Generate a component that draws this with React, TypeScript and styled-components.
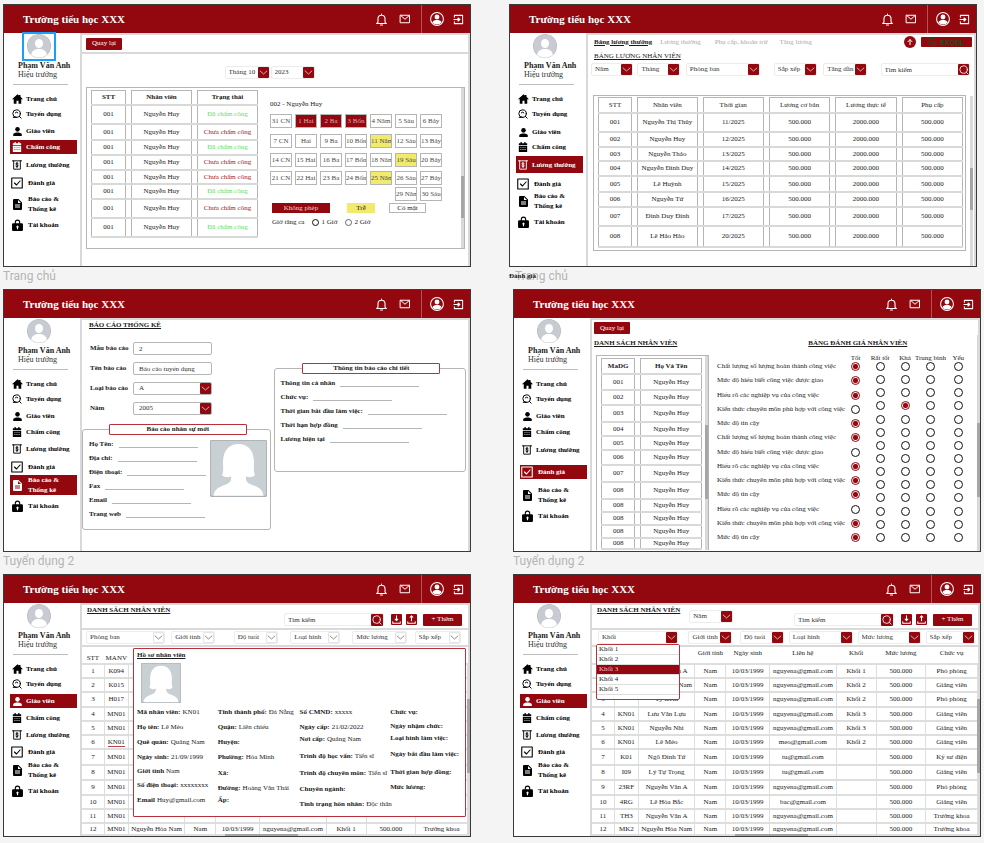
import React from 'react';
import styled, { createGlobalStyle, css } from 'styled-components';

const RED = '#93070f';
const LINE = '#d9d9d9';
const EDGE = '#b5b5b5';
const SERIF = '"Liberation Serif", "Times New Roman", serif';

const Global = createGlobalStyle`
  * { box-sizing: border-box; }
  body { margin: 0; background: #f4f4f4; font-family: ${SERIF}; font-size: 7px; line-height: 9px; color: #1a1a1a; }
  button, input, select { font: inherit; color: inherit; margin: 0; padding: 0; border: 0; background: none; border-radius: 0; }
  h1, h2, p, dl, dd, ul, fieldset, legend { margin: 0; padding: 0; border: 0; list-style: none; }
  a { color: inherit; text-decoration: none; }
`;

/* ---------- canvas ---------- */

const Canvas = styled.main`
  padding-top: 4px;
  min-height: 100vh;
`;
const BoardRow = styled.div<{ $gap: number; $end: number }>`
  display: flex;
  gap: ${(p) => p.$gap}px;
  padding: 0 ${(p) => p.$end}px 0 3px;
`;
const BoardCell = styled.section`
  flex: 1 1 0;
  min-width: 0;
  position: relative;
`;
const Frame = styled.div`
  display: flex;
  flex-direction: column;
  min-height: 263px;
  border: 1px solid #3a3a3a;
  background: #fff;
`;
const BoardName = styled.p<{ $indent?: number }>`
  height: 22px;
  padding-left: ${(p) => p.$indent ?? 0}px;
  font: 12px/19px Roboto, sans-serif;
  color: #b4b4b4;
`;
const StrayName = styled.p`
  position: absolute;
  left: 0;
  bottom: 8px;
  font-weight: bold;
`;

/* ---------- icons ---------- */

const Svg = styled.svg<{ $w?: number; $h?: number }>`
  display: block;
  flex: none;
  width: ${(p) => p.$w ?? 10}px;
  height: ${(p) => p.$h ?? p.$w ?? 10}px;
  fill: currentColor;
`;
type LineProps = { w?: number; h?: number; sw?: number; children: React.ReactNode };
const Line = ({ w, h, children, sw = 2 }: LineProps) => (
  <Svg viewBox="0 0 24 24" $w={w} $h={h} aria-hidden>
    <g fill="none" stroke="currentColor" strokeWidth={sw} strokeLinecap="round" strokeLinejoin="round">{children}</g>
  </Svg>
);
const HomeIcon = () => (
  <Svg viewBox="1 2 22 19" $w={11} $h={10} aria-hidden><path d="M10 21v-6h4v6h5.5v-9H23L18 7V3.5h-3v1L12 2 1 12h3.5v9z" /></Svg>
);
const HuntIcon = () => (
  <Line w={10} sw={2.4}><circle cx="11" cy="11" r="9" /><path d="M11 20H3M17.5 17.5 22 22M8 9a4 4 0 0 1 6 0" /></Line>
);
const PersonIcon = () => (
  <Svg viewBox="3 2 18 19" $w={9} aria-hidden><circle cx="12" cy="7" r="4.8" /><path d="M12 13.500c-3 0-9 1-9 4.500v3h18v-3c0-3.500-6-4.500-9-4.500z" /></Svg>
);
const CalendarIcon = () => (
  <Svg viewBox="0 0 24 24" $w={10} aria-hidden>
    <path fillRule="evenodd" d="M6 0h3v3h6V0h3v3h4v4H2V3h4zM2 9h20v15H2zM6 12v2h2v-2zm5 0v2h2v-2zm5 0v2h2v-2zM6 17v2h2v-2zm5 0v2h2v-2zm5 0v2h2v-2z" />
  </Svg>
);
const SalaryIcon = () => (
  <Line w={10} sw={2.2}><path d="M1 2h22M4 2v20h16V2M15 8.500c-1-1.500-6-1.500-6 1s6 2 6 4.500-5 2.500-6 1M12 6v12" /></Line>
);
const CheckIcon = () => (
  <Line w={12} sw={2.2}><path d="M1.500 2h21v20h-21zM7 12l4 4 7-8" /></Line>
);
const FileIcon = () => (
  <Svg viewBox="3 1 18 22" $w={9} $h={11} aria-hidden>
    <path fillRule="evenodd" d="M14 1H5a2 2 0 0 0-2 2v18a2 2 0 0 0 2 2h14a2 2 0 0 0 2-2V8zm3 17H7v-2h10zm0-4H7v-2h10zm-4-5V3l6 6z" />
  </Svg>
);
const LockIcon = () => (
  <Svg viewBox="2 0 20 22" $w={11} $h={12} aria-hidden>
    <path fillRule="evenodd" d="M18 8h-1V6A5 5 0 0 0 7 6v2H4a2 2 0 0 0-2 2v10a2 2 0 0 0 2 2h16a2 2 0 0 0 2-2V10a2 2 0 0 0-2-2zm-5 8v3h-2v-3a2 2 0 1 1 2 0zm2-8H9V6a3 3 0 0 1 6 0z" />
  </Svg>
);
const BellIcon = () => (
  <Line w={13}><path d="M12 2v2M12 4a6.500 6.500 0 0 0-6.500 6.500V17L3 19.500h18L18.500 17v-6.500A6.500 6.500 0 0 0 12 4zM10 22h4" /></Line>
);
const MailIcon = () => (
  <Line w={12} sw={2}><path d="M3 4.500h18v15H3zM3.500 5 12 12.500 20.500 5" /></Line>
);
const AccountIcon = () => (
  <Svg viewBox="0 0 24 24" $w={14} aria-hidden>
    <circle cx="12" cy="12" r="11" fill="none" stroke="currentColor" strokeWidth="1.8" />
    <circle cx="12" cy="8.500" r="4.200" />
    <path d="M4 18c1-3.500 5-4.500 8-4.500s7 1 8 4.500c-4 4.500-12 4.500-16 0z" />
  </Svg>
);
const ExitIcon = () => (
  <Line w={11} sw={2.2}><path d="M3 7V3h18v18H3v-4M2 12h11M11 8.500 15 12l-4 3.500z" /></Line>
);
const ChevronIcon = () => <Line w={9} sw={1.8}><path d="M3 8l9 8 9-8" /></Line>;
const SearchIcon = () => <Line w={10} sw={2}><circle cx="11" cy="11" r="9" /><path d="M17 17l5 5" /></Line>;
const DownIcon = () => <Line w={9} sw={2.8}><path d="M12 2v12M8.500 11l3.500 4 3.500-4M2 18v4h20v-4" /></Line>;
const UpIcon = () => <Line w={9} sw={2.8}><path d="M12 15V3M8.500 6 12 2l3.500 4M2 18v4h20v-4" /></Line>;
const ArrowUpIcon = () => <Line w={8} sw={3}><path d="M12 20V5M6 11l6-6 6 6" /></Line>;
const SheetIcon = () => <Line w={8} sw={3}><path d="M3 2h12l6 6v14H3zM8 12h8M8 17h8" /></Line>;
const AvatarArt = () => (
  <Svg viewBox="0 0 48 48" $w={24} aria-hidden>
    <clipPath id="disc"><circle cx="24" cy="24" r="23" /></clipPath>
    <circle cx="24" cy="24" r="24" fill="#b4b8bd" />
    <circle cx="24" cy="24" r="23" fill="#c8ccd2" />
    <g clipPath="url(#disc)" fill="#fff"><ellipse cx="24" cy="19" rx="8" ry="9" /><path d="M8 44c1-11 8-14 16-14s15 3 16 14l-6 6H14z" /></g>
  </Svg>
);
const PortraitArt = ({ size }: { size: number }) => (
  <Svg viewBox="0 0 100 100" $w={size} aria-hidden>
    <rect width="100" height="100" rx="2" fill="#aab0b3" />
    <rect x="1.500" y="1.500" width="97" height="96" fill="#c9d0d3" />
    <path fill="#fff" d="M50 7c17 0 26 12 27 28 1 12-2 18 2 27-5 4-11 4-16 2-1 8 3 12 9 14 11 4 20 7 22 20H6c2-13 11-16 22-20 6-2 10-6 9-14-5 2-11 2-16-2 4-9 1-15 2-27C24 19 33 7 50 7z" />
  </Svg>
);

/* ---------- header and sidebar ---------- */

const TopBar = styled.header`
  display: flex;
  align-items: center;
  height: 28px;
  padding: 0 6px 0 19px;
  background: ${RED};
  color: #fff;
`;
const SchoolName = styled.h1`
  flex: 1;
  font-size: 11px;
  line-height: 14px;
`;
const IconButton = styled.button`
  display: flex;
  margin-left: 11px;
`;
const AccountArea = styled.div`
  display: flex;
  align-items: center;
  align-self: stretch;
  gap: 9px;
  margin-left: 10px;
  padding-left: 8px;
  border-left: 1px solid #b95057;
  ${IconButton} { margin-left: 0; }
`;
const Body = styled.div`
  flex: 1;
  display: flex;
`;
const Sidebar = styled.aside`
  flex: 0 0 76px;
  padding: 1px 3px 4px 6px;
`;
const AvatarBox = styled.div<{ $selected?: boolean }>`
  width: 30px;
  margin-left: 14px;
  padding: 0 3px 1px;
  ${(p) => p.$selected && css`outline: 2px solid #18a0fb;`}
`;
const UserName = styled.p`
  margin-top: 1px;
  padding-left: 8px;
  font-size: 8px;
  line-height: 11px;
  font-weight: bold;
  white-space: nowrap;
`;
const UserRole = styled.p`
  padding-left: 8px;
  font-size: 8px;
  line-height: 8px;
  color: #333;
`;
const SideRule = styled.hr`
  width: 55px;
  margin: 5px 0 7px 3px;
  border: 0;
  border-top: 1px solid #bdbdbd;
`;
const NavItem = styled.li<{ $gap: number }>`
  margin-top: ${(p) => p.$gap}px;
`;
const NavLink = styled.a<{ $active: boolean; $late: boolean; $tall: boolean }>`
  display: flex;
  align-items: center;
  gap: ${(p) => (p.$late ? 5 : 3)}px;
  min-height: ${(p) => (p.$tall ? 17 : 14)}px;
  padding: 0 1px;
  font-weight: bold;
  line-height: 10px;
  white-space: pre;
  background: ${(p) => (p.$active ? RED : 'transparent')};
  color: ${(p) => (p.$active ? '#fff' : '#000')};
`;
const NavIcon = styled.span`
  display: flex;
  justify-content: center;
  flex: 0 0 12px;
`;
const Main = styled.div`
  flex: 1;
  min-width: 0;
  display: flex;
  flex-direction: column;
  position: relative;
  border: 2px solid ${LINE};
  border-bottom: 0;
`;

const NAV: [string, () => React.JSX.Element][] = [
  ['Trang chủ', HomeIcon],
  ['Tuyển dụng', HuntIcon],
  ['Giáo viên', PersonIcon],
  ['Chấm công', CalendarIcon],
  ['Lương thưởng', SalaryIcon],
  ['Đánh giá', CheckIcon],
  ['Báo cáo &\nThống kê', FileIcon],
  ['Tài khoản', LockIcon],
];

type BoardProps = {
  name: string;
  indent?: number;
  active: number;
  gaps: number[];
  tall?: boolean;
  selected?: boolean;
  stray?: string;
  children: React.ReactNode;
};
const Board = ({ name, indent, active, gaps, tall, selected, stray, children }: BoardProps) => (
  <BoardCell>
    <Frame>
      <TopBar>
        <SchoolName>Trường tiểu học XXX</SchoolName>
        <IconButton aria-label="Thông báo"><BellIcon /></IconButton>
        <IconButton aria-label="Thư"><MailIcon /></IconButton>
        <AccountArea>
          <IconButton aria-label="Hồ sơ"><AccountIcon /></IconButton>
          <IconButton aria-label="Đăng xuất"><ExitIcon /></IconButton>
        </AccountArea>
      </TopBar>
      <Body>
        <Sidebar>
          <AvatarBox $selected={selected}><AvatarArt /></AvatarBox>
          <UserName>Phạm Văn Anh</UserName>
          <UserRole>Hiệu trưởng</UserRole>
          <SideRule />
          <nav>
            <ul>
              {NAV.map(([label, Icon], i) => (
                <NavItem key={label} $gap={gaps[i]}>
                  <NavLink href="#" $active={i === active} $late={i > 4} $tall={i === active && !!tall}>
                    <NavIcon><Icon /></NavIcon>
                    {label}
                  </NavLink>
                </NavItem>
              ))}
            </ul>
          </nav>
        </Sidebar>
        <Main>{children}</Main>
      </Body>
    </Frame>
    {name && <BoardName $indent={indent}>{name}</BoardName>}
    {stray && <StrayName>{stray}</StrayName>}
  </BoardCell>
);

/* ---------- shared controls ---------- */

const FieldBox = styled.span<{ $w: number; $gap?: number; $edge?: string; $fixed?: boolean }>`
  display: flex;
  align-items: center;
  flex: ${(p) => (p.$fixed ? `0 0 ${p.$w}px` : `${p.$w} 1 0`)};
  min-width: 0;
  height: 13px;
  margin-left: ${(p) => p.$gap ?? 0}px;
  border: 1px solid ${(p) => p.$edge ?? '#ececec'};
  border-radius: 2px;
  background: #fff;
  select, input {
    flex: 1;
    width: 0;
    min-width: 0;
    height: 11px;
    padding-left: 3px;
    appearance: none;
    outline: 0;
    color: #333;
  }
  input::placeholder { color: #333; }
`;
const ArrowBox = styled.span<{ $plain?: boolean }>`
  display: flex;
  align-items: center;
  justify-content: center;
  flex: 0 0 11px;
  height: 11px;
  border-radius: 1px;
  pointer-events: none;
  background: ${(p) => (p.$plain ? '#fff' : RED)};
  color: ${(p) => (p.$plain ? '#555' : '#fff')};
  border: ${(p) => (p.$plain ? '1px solid #e4e4e4' : '0')};
`;
type PickProps = { label: string; value?: string; w: number; gap?: number; plain?: boolean; edge?: string; fixed?: boolean };
const Pick = ({ label, value, w, gap, plain, edge, fixed }: PickProps) => (
  <FieldBox $w={w} $gap={gap} $edge={edge} $fixed={fixed}>
    <select aria-label={label}><option>{value ?? label}</option></select>
    <ArrowBox $plain={plain}><ChevronIcon /></ArrowBox>
  </FieldBox>
);
const SquareButton = styled.button<{ $gap?: number; $size?: number }>`
  display: flex;
  align-items: center;
  justify-content: center;
  flex: none;
  width: ${(p) => p.$size ?? 11}px;
  height: ${(p) => p.$size ?? 11}px;
  margin-left: ${(p) => p.$gap ?? 0}px;
  border-radius: 1px;
  background: ${RED};
  color: #fff;
`;
const RedButton = styled.button<{ $w: number; $gap?: number }>`
  display: flex;
  align-items: center;
  justify-content: center;
  gap: 3px;
  flex: 0 0 ${(p) => p.$w}px;
  height: 12px;
  margin-left: ${(p) => p.$gap ?? 0}px;
  border-radius: 1px;
  background: ${RED};
  color: #fff;
`;
const ExcelButton = styled(RedButton)`
  height: 10px;
  font: bold 8px/9px Roboto, sans-serif;
  color: #2b4a1c;
`;
const RoundButton = styled(SquareButton)`
  border-radius: 50%;
`;
const Title = styled.h2<{ $light?: boolean }>`
  font-size: 7px;
  line-height: 9px;
  font-weight: ${(p) => (p.$light ? 'normal' : 'bold')};
  text-decoration: underline;
  white-space: nowrap;
`;
const Bar = styled.div<{ $h: number; $l?: number; $r?: number; $ruled?: boolean; $top?: boolean }>`
  display: flex;
  align-items: ${(p) => (p.$top ? 'flex-start' : 'center')};
  min-height: ${(p) => p.$h}px;
  padding: 0 ${(p) => p.$r ?? 0}px 0 ${(p) => p.$l ?? 4}px;
  border-bottom: ${(p) => (p.$ruled ? `2px solid ${LINE}` : '0')};
`;
const Spacer = styled.span`
  flex: 1;
`;
const ScrollTrack = styled.div<{ $right: number; $top: number; $start: number; $len: number; $clear?: boolean }>`
  position: absolute;
  top: ${(p) => p.$top}px;
  bottom: 0;
  right: ${(p) => p.$right}px;
  width: 3px;
  background: ${(p) => (p.$clear ? 'transparent' : LINE)};
  &::after {
    content: '';
    display: block;
    height: ${(p) => p.$len}px;
    margin-top: ${(p) => p.$start}px;
    background: #a6a6a6;
  }
`;
const BottomThumb = styled.div`
  position: absolute;
  left: 37%;
  bottom: 0;
  width: 73px;
  height: 2px;
  background: #a6a6a6;
`;

/* ---------- tables with boxed columns ---------- */

const Panel = styled.div<{ $pad?: string; $m?: string }>`
  position: relative;
  display: flex;
  margin: ${(p) => p.$m ?? '0'};
  padding: ${(p) => p.$pad ?? '0'};
  border: 1px solid ${EDGE};
`;
const Table = styled.table<{ $cols: string; $gap: number }>`
  display: block;
  flex: 1;
  min-width: 0;
  thead, tbody { display: block; }
  tr {
    display: grid;
    grid-template-columns: ${(p) => p.$cols};
    column-gap: ${(p) => p.$gap}px;
    border-bottom: 2px solid ${LINE};
  }
  th, td {
    display: flex;
    align-items: center;
    justify-content: center;
    padding: 0;
    border: solid ${EDGE};
    border-width: 0 1px;
    white-space: nowrap;
  }
  th { border-top-width: 1px; }
`;
const Tr = styled.tr<{ $h: number }>`
  height: ${(p) => p.$h}px;
`;
const Td = styled.td<{ $tone?: string }>`
  color: ${(p) => p.$tone ?? 'inherit'};
`;
const LightTh = styled.th`
  font-weight: normal;
`;

/* ---------- attendance board ---------- */

const GREEN = '#5be05b';
const ATTENDANCE: [number, boolean][] = [
  [19, true], [16, false], [15, true], [15, false], [14, false], [15, true], [19, false], [19, true],
];
const MonthBar = styled.div`
  display: flex;
  justify-content: center;
  padding: 12px 11px 8px 0;
`;
const AttendanceTable = styled.div`
  flex: 0 0 167px;
  display: flex;
`;
const DayPane = styled.div`
  flex: 1;
  padding: 10px 0 0 12px;
`;
const Days = styled.div`
  display: grid;
  grid-template-columns: repeat(7, 22px);
  grid-template-rows: 20px 19px 18px 16px 16px;
  column-gap: 3px;
  margin-top: 5px;
`;
const Day = styled.button<{ $kind?: string; $start?: boolean }>`
  height: 14px;
  overflow: hidden;
  white-space: nowrap;
  border: 1px solid ${EDGE};
  grid-column: ${(p) => (p.$start ? '6' : 'auto')};
  background: ${(p) => (p.$kind === 'r' ? RED : p.$kind === 'y' ? '#f1ea6c' : '#fff')};
  color: ${(p) => (p.$kind === 'r' ? '#e3a9ad' : '#4a4a4a')};
`;
const DAYS = ['31 CN', '1 Hai', '2 Ba', '3 Bốn', '4 Năm', '5 Sáu', '6 Bảy', '7 CN', 'Hai', '9 Ba', '10 Bốn', '11 Năm', '12 Sáu', '13 Bảy', '14 CN', '15 Hai', '16 Ba', '17 Bốn', '18 Năm', '19 Sáu', '20 Bảy', '21 CN', '22 Hai', '23 Ba', '24 Bốn', '25 Năm', '26 Sáu', '27 Bảy', '29 Năm', '30 Sáu'];
const KIND: Record<string, string> = { '1 Hai': 'r', '2 Ba': 'r', '3 Bốn': 'r', '11 Năm': 'y', '19 Sáu': 'y', '25 Năm': 'y' };
const Legend = styled.div`
  display: flex;
  align-items: center;
  padding-left: 2px;
  line-height: 10px;
  text-align: center;
`;
const Key = styled.span<{ $w: number; $gap?: number; $bg: string; $fg?: string }>`
  width: ${(p) => p.$w}px;
  margin-left: ${(p) => p.$gap ?? 0}px;
  background: ${(p) => p.$bg};
  color: ${(p) => p.$fg ?? '#222'};
  box-shadow: ${(p) => (p.$bg === '#fff' ? `inset 0 0 0 1px ${EDGE}` : 'none')};
`;
const Overtime = styled.div`
  display: flex;
  align-items: center;
  margin-top: 5px;
  padding-left: 2px;
`;
const OptionLabel = styled.label`
  display: flex;
  align-items: center;
  gap: 2px;
  margin-left: 8px;
`;
const Radio = styled.input<{ $size?: number; $soft?: boolean }>`
  appearance: none;
  flex: none;
  width: ${(p) => p.$size ?? 9}px;
  height: ${(p) => p.$size ?? 9}px;
  && { border: 1px solid ${(p) => (p.$soft ? '#666' : '#111')}; border-radius: 50%; background: #fff; }
  &&:checked { border-color: ${RED}; background: radial-gradient(circle, ${RED} 0 2px, #e9b9bc 3px, #fff 3px); }
`;

const AttendanceBoard = () => (
  <Board name="Trang chủ" active={3} gaps={[0, 1, 3, 2, 4, 4, 4, 4]} selected>
    <Bar $h={19} $ruled><RedButton $w={36}>Quay lại</RedButton></Bar>
    <MonthBar>
      <Pick label="Tháng" value="Tháng 10" w={45} fixed />
      <Pick label="Năm" value="2023" w={44} gap={1} fixed />
    </MonthBar>
    <Panel $m="0 3px 17px 4px" $pad="2px 4px 10px">
      <AttendanceTable>
        <Table $cols="35fr 61fr 61fr" $gap={5}>
          <thead><Tr $h={16}><th>STT</th><th>Nhân viên</th><th>Trạng thái</th></Tr></thead>
          <tbody>
            {ATTENDANCE.map(([h, done], i) => (
              <Tr key={i} $h={h}>
                <Td>001</Td><Td>Nguyễn Huy</Td>
                <Td $tone={done ? GREEN : '#a8141d'}>{done ? 'Đã chấm công' : 'Chưa chấm công'}</Td>
              </Tr>
            ))}
          </tbody>
        </Table>
      </AttendanceTable>
      <DayPane>
        <p>002 - Nguyễn Huy</p>
        <Days>
          {DAYS.map((d) => <Day key={d} $kind={KIND[d]} $start={d === '29 Năm'}>{d}</Day>)}
        </Days>
        <Legend>
          <Key $w={58} $bg={RED} $fg="#f0d5d6">Không phép</Key>
          <Key $w={28} $gap={17} $bg="#f1ea6c">Trễ</Key>
          <Key $w={37} $gap={14} $bg="#fff">Có mặt</Key>
        </Legend>
        <Overtime>
          Giờ tăng ca
          <OptionLabel><Radio type="radio" name="overtime" $size={7} />1 Giờ</OptionLabel>
          <OptionLabel><Radio type="radio" name="overtime" $size={7} $soft />2 Giờ</OptionLabel>
        </Overtime>
      </DayPane>
      <ScrollTrack $right={0} $top={0} $start={88} $len={42} />
    </Panel>
  </Board>
);

/* ---------- salary board ---------- */

const Tab = styled.button<{ $on?: boolean; $gap?: number }>`
  margin-left: ${(p) => p.$gap ?? 0}px;
  white-space: nowrap;
  font-weight: ${(p) => (p.$on ? 'bold' : 'normal')};
  text-decoration: ${(p) => (p.$on ? 'underline' : 'none')};
  color: ${(p) => (p.$on ? '#1a1a1a' : '#ababab')};
`;
const SALARY: [number, string, string][] = [
  [19, 'Nguyễn Thị Thủy', '11/2025'], [15, 'Nguyễn Huy', '12/2025'], [14, 'Nguyễn Thảo', '13/2025'], [15, 'Nguyễn Đình Duy', '14/2025'],
  [16, 'Lê Huỳnh', '15/2025'], [15, 'Nguyễn Tứ', '16/2025'], [19, 'Đinh Duy Đinh', '17/2025'], [21, 'Lê Hảo Hảo', '20/2025'],
];
const SalaryBoard = () => (
  <Board name="Trang chủ" indent={6} stray="Đánh giá" active={4} tall gaps={[0, 1, 4, 1, 2, 4, 0, 4]}>
    <Bar $h={14} $l={6} $r={2}>
      <Tab $on>Bảng lương thưởng</Tab>
      <Tab $gap={8}>Lương thưởng</Tab>
      <Tab $gap={14}>Phụ cấp, khoản trừ</Tab>
      <Tab $gap={12}>Tăng lương</Tab>
      <Spacer />
      <RoundButton aria-label="Tải lên" $size={12}><ArrowUpIcon /></RoundButton>
      <ExcelButton $w={51} $gap={5}><SheetIcon />EXCEL</ExcelButton>
    </Bar>
    <Bar $h={14} $l={6}><Title $light>BẢNG LƯƠNG NHÂN VIÊN</Title></Bar>
    <Bar $h={32} $l={3} $r={4} $top>
      <Pick label="Năm" w={42} />
      <Pick label="Tháng" w={42} gap={4} />
      <Pick label="Phòng ban" w={75} gap={6} />
      <Pick label="Sắp xếp" w={43} gap={14} />
      <Pick label="Tăng dần" w={43} gap={6} />
      <FieldBox $w={91} $gap={14}>
        <input aria-label="Tìm kiếm" placeholder="Tìm kiếm" />
        <SquareButton aria-label="Tìm"><SearchIcon /></SquareButton>
      </FieldBox>
    </Bar>
    <Panel $m="0 8px 13px 5px" $pad="1px 2px 2px 4px">
      <Table $cols="34fr 60fr 61fr 61fr 61fr 61fr" $gap={5}>
        <thead>
          <Tr $h={17}>
            {['STT', 'Nhân viên', 'Thời gian', 'Lương cơ bản', 'Lương thực tế', 'Phụ cấp'].map((t) => <LightTh key={t}>{t}</LightTh>)}
          </Tr>
        </thead>
        <tbody>
          {SALARY.map(([h, who, when], i) => (
            <Tr key={who} $h={h}>
              <Td>{`00${i + 1}`}</Td><Td>{who}</Td><Td>{when}</Td><Td>500.000</Td><Td>2000.000</Td><Td>500.000</Td>
            </Tr>
          ))}
        </tbody>
      </Table>
    </Panel>
    <ScrollTrack $right={1} $top={61} $start={72} $len={42} />
  </Board>
);

/* ---------- report board ---------- */

const ReportGrid = styled.div`
  display: grid;
  grid-template-columns: 189fr 193fr;
  column-gap: 3px;
  align-items: start;
  padding-right: 2px;
`;
const ReportForm = styled.div`
  display: grid;
  grid-template-columns: 43px 79px;
  row-gap: 7px;
  align-items: center;
  padding: 11px 0 9px 8px;
  font-weight: bold;
  white-space: nowrap;
  select, input { font-weight: normal; padding-left: 5px; }
`;
const Group = styled.fieldset<{ $h: number; $top?: number }>`
  display: flex;
  justify-content: space-between;
  min-width: 0;
  min-height: ${(p) => p.$h}px;
  margin-top: ${(p) => p.$top ?? 0}px;
  padding: 2px 3px 0 6px;
  && { border: 1px solid ${EDGE}; border-radius: 3px; }
`;
const GroupName = styled.legend`
  width: 138px;
  text-align: center;
  font-weight: bold;
  && { border: 1px solid #b8323b; border-radius: 1px; }
`;
const Blank = styled.label`
  display: flex;
  align-items: center;
  gap: 5px;
  height: 14px;
  font-weight: bold;
  white-space: nowrap;
  input { width: 79px; height: 8px; border-bottom: 1px solid #b5b5b5; outline: 0; }
`;
const PhotoSlot = styled.div`
  padding-top: 3px;
`;
const ReportBoard = () => (
  <Board name="Tuyển dụng 2" active={6} gaps={[0, 1, 3, 2, 3, 4, 1, 4]}>
    <Bar $h={11} $l={7}><Title>BÁO CÁO THỐNG KÊ</Title></Bar>
    <ReportGrid>
      <div>
        <ReportForm>
          <label htmlFor="r1">Mẫu báo cáo</label>
          <FieldBox $w={79} $edge={EDGE}><input id="r1" defaultValue="2" /></FieldBox>
          <label htmlFor="r2">Tên báo cáo</label>
          <FieldBox $w={79} $edge={EDGE}><input id="r2" defaultValue="Báo cáo tuyển dụng" /></FieldBox>
          <span>Loại báo cáo</span>
          <Pick label="Loại báo cáo" value="A" w={79} edge={EDGE} />
          <span>Năm</span>
          <Pick label="Năm" value="2005" w={79} edge={EDGE} />
        </ReportForm>
        <Group $h={106}>
          <GroupName>Báo cáo nhân sự mới</GroupName>
          <div>
            {['Họ Tên:', 'Địa chỉ:', 'Điện thoại:', 'Fax', 'Email', 'Trang web'].map((t) => <Blank key={t}>{t}<input /></Blank>)}
          </div>
          <PhotoSlot><PortraitArt size={57} /></PhotoSlot>
        </Group>
      </div>
      <Group $h={109} $top={32}>
        <GroupName>Thông tin báo cáo chi tiết</GroupName>
        <div>
          {['Thông tin cá nhân', 'Chức vụ:', 'Thời gian bắt đầu làm việc:', 'Thời hạn hợp đồng', 'Lương hiện tại'].map((t) => <Blank key={t}>{t}<input /></Blank>)}
        </div>
      </Group>
    </ReportGrid>
  </Board>
);

/* ---------- evaluation board ---------- */

const EvalRow = styled.div`
  display: flex;
  align-items: flex-start;
  flex: 1;
`;
const EvalTitles = styled.div`
  display: flex;
  gap: 131px;
  padding: 3px 2px 6px;
`;
const StaffPanel = styled(Panel)`
  flex: 0 0 113px;
  border-bottom: 0;
`;
const Criteria = styled.div`
  display: flex;
  flex-direction: column;
  justify-content: space-between;
  flex: 132 1 0;
  min-width: 0;
  height: 188px;
  padding-top: 8px;
  white-space: nowrap;
`;
const Grade = styled.div<{ $w: number }>`
  flex: ${(p) => p.$w} 1 0;
  min-width: 0;
  height: 188px;
  display: flex;
  flex-direction: column;
  align-items: center;
  white-space: nowrap;
`;
const GradeName = styled.span`
  height: 8px;
  line-height: 8px;
`;
const Dots = styled.div`
  flex: 1;
  display: flex;
  flex-direction: column;
  justify-content: space-between;
`;
const Ratings = styled.div`
  display: flex;
  flex: 1;
  padding: 0 7px 0 8px;
`;
const CRITERIA = ['Chất lượng số lượng hoàn thành công việc', 'Mức độ hiểu biết công việc được giao', 'Hiểu rõ các nghiệp vụ của công việc', 'Kiến thức chuyên môn phù hợp với công việc', 'Mức độ tin cậy'];
const CRITERIA_ROWS = [...CRITERIA, ...CRITERIA, ...CRITERIA.slice(2)];
const STAFF: [string, number][] = [['001', 16], ['002', 15], ['003', 17], ['004', 14], ['005', 14], ['006', 15], ['007', 17], ['008', 17], ['008', 13], ['008', 13], ['008', 13], ['008', 11]];
const range = (n: number) => Array.from({ length: n }, (_, i) => i);
const GRADES: [string, number, number, number[]][] = [
  ['Tốt', 20, 13, [0, 1, 2, 4, 5, 7, 8, 9, 11, 12]],
  ['Rất tốt', 30, 14, []],
  ['Khá', 21, 14, [3]],
  ['Trung bình', 31, 14, []],
  ['Yếu', 26, 14, []],
];
const EvaluationBoard = () => (
  <Board name="Tuyển dụng 2" active={5} gaps={[0, 1, 3, 2, 4, 8, 6, 4]}>
    <Bar $h={16} $l={2}><RedButton $w={36}>Quay lại</RedButton></Bar>
    <EvalTitles>
      <Title>DANH SÁCH NHÂN VIÊN</Title>
      <Title>BẢNG ĐÁNH GIÁ NHÂN VIÊN</Title>
    </EvalTitles>
    <EvalRow>
      <StaffPanel $m="1px 0 0 4px" $pad="2px 6px 0 4px">
        <Table $cols="34fr 61fr" $gap={5}>
          <thead><Tr $h={17}><th>MaDG</th><th>Họ Và Tên</th></Tr></thead>
          <tbody>{STAFF.map(([id, h], i) => <Tr key={i} $h={h}><Td>{id}</Td><Td>Nguyễn Huy</Td></Tr>)}</tbody>
        </Table>
        <ScrollTrack $right={0} $top={0} $start={69} $len={74} />
      </StaffPanel>
      <Ratings>
        <Criteria>{CRITERIA_ROWS.map((t, i) => <span key={i}>{t}</span>)}</Criteria>
        {GRADES.map(([grade, w, count, on]) => (
          <Grade key={grade} $w={w}>
            <GradeName>{grade}</GradeName>
            <Dots>
              {range(count).map((i) => <Radio key={i} type="radio" name={`${grade}-${i}`} aria-label={`${grade} ${i + 1}`} defaultChecked={on.includes(i)} />)}
            </Dots>
          </Grade>
        ))}
      </Ratings>
    </EvalRow>
    <ScrollTrack $right={-2} $top={15} $start={88} $len={74} />
  </Board>
);

/* ---------- staff list boards ---------- */

const StaffTable = styled(Table)<{ $low?: boolean }>`
  tr { border-bottom-color: #dedede; column-gap: 0; }
  th, td { border-width: 0 1px 0 0; border-color: #dedede; }
  th {
    align-items: ${(p) => (p.$low ? 'flex-end' : 'flex-start')};
    padding-top: 2px;
    font-weight: normal;
    border-right-color: transparent;
  }
`;
const STAFF_COLS = '23fr 24fr 57fr 31fr 44fr 67fr 40fr 50fr 52fr';
const HEIGHTS = [14, 14, 15, 14, 14, 14, 16, 15, 15, 14, 14, 12];
type Staff = { no?: string; id?: string; name?: string; sex?: string; born?: string; mail?: string; block?: string; pay?: string; job?: string };
const person = (no: number, id: string, name: string, mail: string, block: string, job: string): Staff => ({
  no: String(no), id, name, sex: 'Nam', born: '10/03/1999', mail: `${mail}@gmail.com`, block, pay: '500.000', job,
});
const STAFF_ROWS: Staff[] = [
  { ...person(1, '', 'Nguyễn Văn A', 'nguyena', 'Khối 1', 'Phó phòng'), no: '' },
  { ...person(2, '', 'Nguyễn Hòa Nam', 'nguyena', 'Khối 2', 'Giảng viên'), no: '' },
  person(3, '', 'Tý Đêm', 'nguyena', 'Khối 2', 'Phó phòng'),
  person(4, 'KN01', 'Lưu Văn Lựu', 'nguyena', 'Khối 3', 'Giảng viên'),
  person(5, 'KN01', 'Nguyễn Nhi', 'nguyena', 'Khối 3', 'Giảng viên'),
  person(6, 'KN01', 'Lê Mèo', 'meo', 'Khối 2', 'Giảng viên'),
  person(7, 'K01', 'Ngô Đình Tứ', 'tu', '', 'Kỹ sư điện'),
  person(8, 'I09', 'Lý Tự Trọng', 'tu', '', 'Giảng viên'),
  person(9, '23RF', 'Nguyễn Văn A', 'nguyena', '', 'Phó phòng'),
  person(10, '4RG', 'Lê Hòa Bắc', 'bac', '', 'Giảng viên'),
  person(11, 'TH3', 'Nguyễn Văn A', 'nguyena', '', 'Trưởng khoa'),
  person(12, 'MK2', 'Nguyễn Hòa Nam', 'nguyena', '', 'Trưởng khoa'),
];
const CODES = ['K094', 'K015', 'H017', 'MN01', 'MN01', 'KN01', 'MN01', 'MN01', 'MN01', 'MN01', 'MN01'];
const CODE_ROWS: Staff[] = [
  ...CODES.map((id, i) => ({ no: String(i + 1), id })),
  person(12, 'MN01', 'Nguyễn Hòa Nam', 'nguyena', 'Khối 1', 'Trưởng khoa'),
];
const CodeLink = styled.a`
  border-bottom: 1px solid #c0404a;
  line-height: 8px;
`;
const StaffList = ({ heads, rows, link, low }: { heads: string[]; rows: Staff[]; link?: number; low?: boolean }) => (
  <StaffTable $cols={STAFF_COLS} $gap={0} $low={low}>
    <thead><Tr $h={18}>{heads.map((t, i) => <th key={i}>{t}</th>)}</Tr></thead>
    <tbody>
      {rows.map((r, i) => (
        <Tr key={i} $h={HEIGHTS[i]}>
          <Td>{r.no}</Td>
          <Td>{link === i ? <CodeLink href="#">{r.id}</CodeLink> : r.id}</Td>
          <Td>{r.name}</Td><Td>{r.sex}</Td><Td>{r.born}</Td><Td>{r.mail}</Td><Td>{r.block}</Td><Td>{r.pay}</Td><Td>{r.job}</Td>
        </Tr>
      ))}
    </tbody>
  </StaffTable>
);
const ListTools = () => (
  <>
    <FieldBox $w={100} $fixed>
      <input aria-label="Tìm kiếm" placeholder="Tìm kiếm" />
      <SquareButton aria-label="Tìm" $size={12}><SearchIcon /></SquareButton>
    </FieldBox>
    <SquareButton aria-label="Tải xuống" $gap={7}><DownIcon /></SquareButton>
    <SquareButton aria-label="Tải lên" $gap={4}><UpIcon /></SquareButton>
    <RedButton $w={39} $gap={6}>+ Thêm</RedButton>
  </>
);
const ListHead = styled.div`
  display: flex;
  align-items: flex-start;
  height: 25px;
  padding: 1px 6px 0 5px;
  border-bottom: 2px solid ${LINE};
`;
const ToolSet = styled.div`
  display: flex;
  align-items: center;
  flex: 1;
  justify-content: flex-end;
  padding-top: 7px;
`;
const YearSlot = styled.div`
  display: flex;
  padding: 4px 0 0 9px;
`;

const Dialog = styled.section`
  position: absolute;
  top: 43px;
  left: 51px;
  right: 2px;
  min-height: 169px;
  padding: 2px 3px;
  border: 1px solid #b8323b;
  border-radius: 1px;
  background: #fff;
`;
const DialogPhoto = styled.div`
  padding: 3px 0 0 4px;
`;
const Fields = styled.div`
  display: grid;
  grid-template-columns: minmax(0, 81fr) minmax(0, 82fr) minmax(0, 91fr) minmax(0, 72fr);
  margin-top: 5px;
`;
const FieldList = styled.dl<{ $rows: string }>`
  display: grid;
  grid-template-rows: ${(p) => p.$rows};
  white-space: nowrap;
`;
const Entry = styled.div`
  display: flex;
  gap: 2px;
  dt { font-weight: bold; }
`;
const PROFILE: [string, [string, string][]][] = [
  ['15px 15px 15px 14px 14px 15px 10px', [['Mã nhân viên:', 'KN01'], ['Họ tên:', 'Lê Mèo'], ['Quê quán:', 'Quảng Nam'], ['Ngày sinh:', '21/09/1999'], ['Giới tính', 'Nam'], ['Số điện thoại:', 'xxxxxxxx'], ['Email', 'Huy@gmail.com']]],
  ['15px 15px 15px 16px 15px 12px 10px', [['Tỉnh thành phố:', 'Đà Nẵng'], ['Quận:', 'Liên chiểu'], ['Huyện:', ''], ['Phường:', 'Hòa Minh'], ['Xã:', ''], ['Đường:', 'Hoàng Văn Thái'], ['Ấp:', '']]],
  ['15px 12px 17px 17px 16px 15px 10px', [['Số CMND:', 'xxxxx'], ['Ngày cấp:', '21/02/2022'], ['Nơi cấp:', 'Quảng Nam'], ['Trình độ học vấn:', 'Tiến sĩ'], ['Trình độ chuyên môn:', 'Tiến sĩ'], ['Chuyên ngành:', ''], ['Tình trạng hôn nhân:', 'Độc thân']]],
  ['14px 12px 16px 18px 15px 10px', [['Chức vụ:', ''], ['Ngày nhậm chức:', ''], ['Loại hình làm việc:', ''], ['Ngày bắt đầu làm việc:', ''], ['Thời gian hợp đồng:', ''], ['Mức lương:', '']]],
];

const ProfileBoard = () => (
  <Board name="" active={2} gaps={[1, 1, 3, 3, 3, 3, 1, 4]}>
    <ListHead>
      <Title>DANH SÁCH NHÂN VIÊN</Title>
      <ToolSet><ListTools /></ToolSet>
    </ListHead>
    <Bar $h={17} $l={4} $r={7} $ruled>
      <Pick label="Phòng ban" w={80} plain />
      <Pick label="Giới tính" w={43} gap={6} plain />
      <Pick label="Độ tuổi" w={44} gap={19} plain />
      <Pick label="Loại hình" w={50} gap={12} plain />
      <Pick label="Mức lương" w={54} gap={12} plain />
      <Pick label="Sắp xếp" w={46} gap={8} plain />
    </Bar>
    <StaffList heads={['STT', 'MANV', '', '', '', '', '', '', '']} rows={CODE_ROWS} link={5} low />
    <BottomThumb />
    <ScrollTrack $right={-2} $top={94} $start={0} $len={74} $clear />
    <Dialog aria-label="Hồ sơ nhân viên">
      <Title>Hồ sơ nhân viên</Title>
      <DialogPhoto><PortraitArt size={40} /></DialogPhoto>
      <Fields>
        {PROFILE.map(([rows, list], c) => (
          <FieldList key={c} $rows={rows}>
            {list.map(([k, v]) => <Entry key={k}><dt>{k}</dt><dd>{v}</dd></Entry>)}
          </FieldList>
        ))}
      </Fields>
    </Dialog>
  </Board>
);

const Menu = styled.ul`
  position: absolute;
  top: 39px;
  left: 4px;
  width: 84px;
  min-height: 56px;
  border: 1px solid #b8323b;
  border-radius: 2px;
  background: #fff;
`;
const MenuItem = styled.li<{ $on: boolean }>`
  height: 10px;
  line-height: 9px;
  padding-left: 2px;
  border-bottom: 1px solid #ddd;
  background: ${(p) => (p.$on ? RED : '#fff')};
  color: ${(p) => (p.$on ? '#e9c3c5' : '#1a1a1a')};
`;
const FilterBoard = () => (
  <Board name="" active={2} gaps={[1, 1, 3, 3, 3, 3, 1, 4]}>
    <ListHead>
      <Title>DANH SÁCH NHÂN VIÊN</Title>
      <YearSlot><Pick label="Năm" w={44} fixed /></YearSlot>
      <ToolSet><ListTools /></ToolSet>
    </ListHead>
    <Bar $h={17} $l={6} $r={3} $ruled>
      <Pick label="Khối" w={81} />
      <Pick label="Giới tính" w={43} gap={10} />
      <Pick label="Độ tuổi" w={43} gap={8} />
      <Pick label="Loại hình" w={64} gap={5} />
      <Pick label="Mức lương" w={63} gap={5} />
      <Pick label="Sắp xếp" w={49} gap={5} />
    </Bar>
    <StaffList heads={['', '', '', 'Giới tính', 'Ngày sinh', 'Liên hệ', 'Khối', 'Mức lương', 'Chức vụ']} rows={STAFF_ROWS} />
    <BottomThumb />
    <ScrollTrack $right={-2} $top={94} $start={0} $len={74} $clear />
    <Menu role="listbox" aria-label="Khối">
      {[1, 2, 3, 4, 5].map((n) => <MenuItem key={n} role="option" aria-selected={n === 3} $on={n === 3}>{`Khối ${n}`}</MenuItem>)}
    </Menu>
  </Board>
);

export default function App() {
  return (
    <>
      <Global />
      <Canvas>
        <BoardRow $gap={38} $end={7}><AttendanceBoard /><SalaryBoard /></BoardRow>
        <BoardRow $gap={42} $end={3}><ReportBoard /><EvaluationBoard /></BoardRow>
        <BoardRow $gap={42} $end={3}><ProfileBoard /><FilterBoard /></BoardRow>
      </Canvas>
    </>
  );
}
